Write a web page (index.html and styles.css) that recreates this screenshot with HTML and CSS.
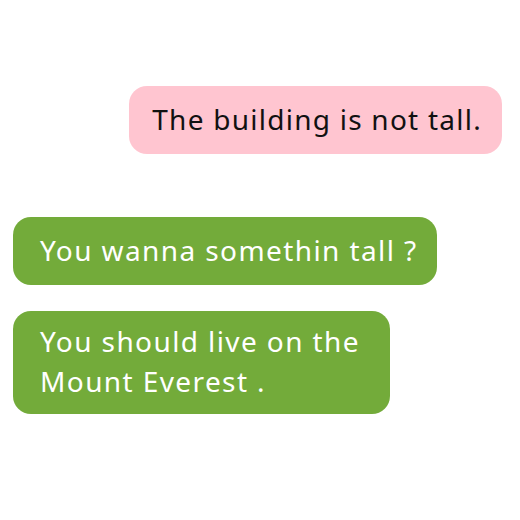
FILE: index.html
```html
<!DOCTYPE html>
<html>
<head>
<meta charset="utf-8">
<link rel="stylesheet" href="styles.css">
</head>
<body>
<div class="chat">
  <div class="row row-right">
    <div class="bubble bubble-pink">The building is not tall.</div>
  </div>
  <div class="row row-left first-left">
    <div class="bubble bubble-green">You wanna somethin tall ?</div>
  </div>
  <div class="row row-left">
    <div class="bubble bubble-green bubble-multi">You should live on the<br>Mount Everest .</div>
  </div>
</div>
</body>
</html>
```

FILE: styles.css
```css
html, body {
  margin: 0;
  padding: 0;
  background: #ffffff;
}
.chat {
  width: 520px;
  height: 520px;
  display: flex;
  flex-direction: column;
  padding-top: 86px;
  box-sizing: border-box;
  font-family: "Noto Sans", "Noto Sans CJK SC", sans-serif;
  font-size: 28px;
  letter-spacing: 1.4px;
}
.row {
  display: flex;
}
.row-right {
  justify-content: flex-end;
  padding-right: 18px;
}
.row-left {
  justify-content: flex-start;
  padding-left: 13px;
}
.first-left {
  margin-top: 63px;
  margin-bottom: 26px;
}
.bubble {
  border-radius: 18px;
  line-height: 40px;
  padding: 13px 19px 15px 27px;
  white-space: nowrap;
}
.bubble-pink {
  background: #ffc5d0;
  color: #111111;
  letter-spacing: 1.25px;
  padding-left: 23px;
  padding-right: 20px;
}
.bubble-green {
  background: #73ab3a;
  color: #ffffff;
}
.bubble-multi {
  padding-top: 10px;
  padding-bottom: 13px;
  padding-right: 30px;
}
```
